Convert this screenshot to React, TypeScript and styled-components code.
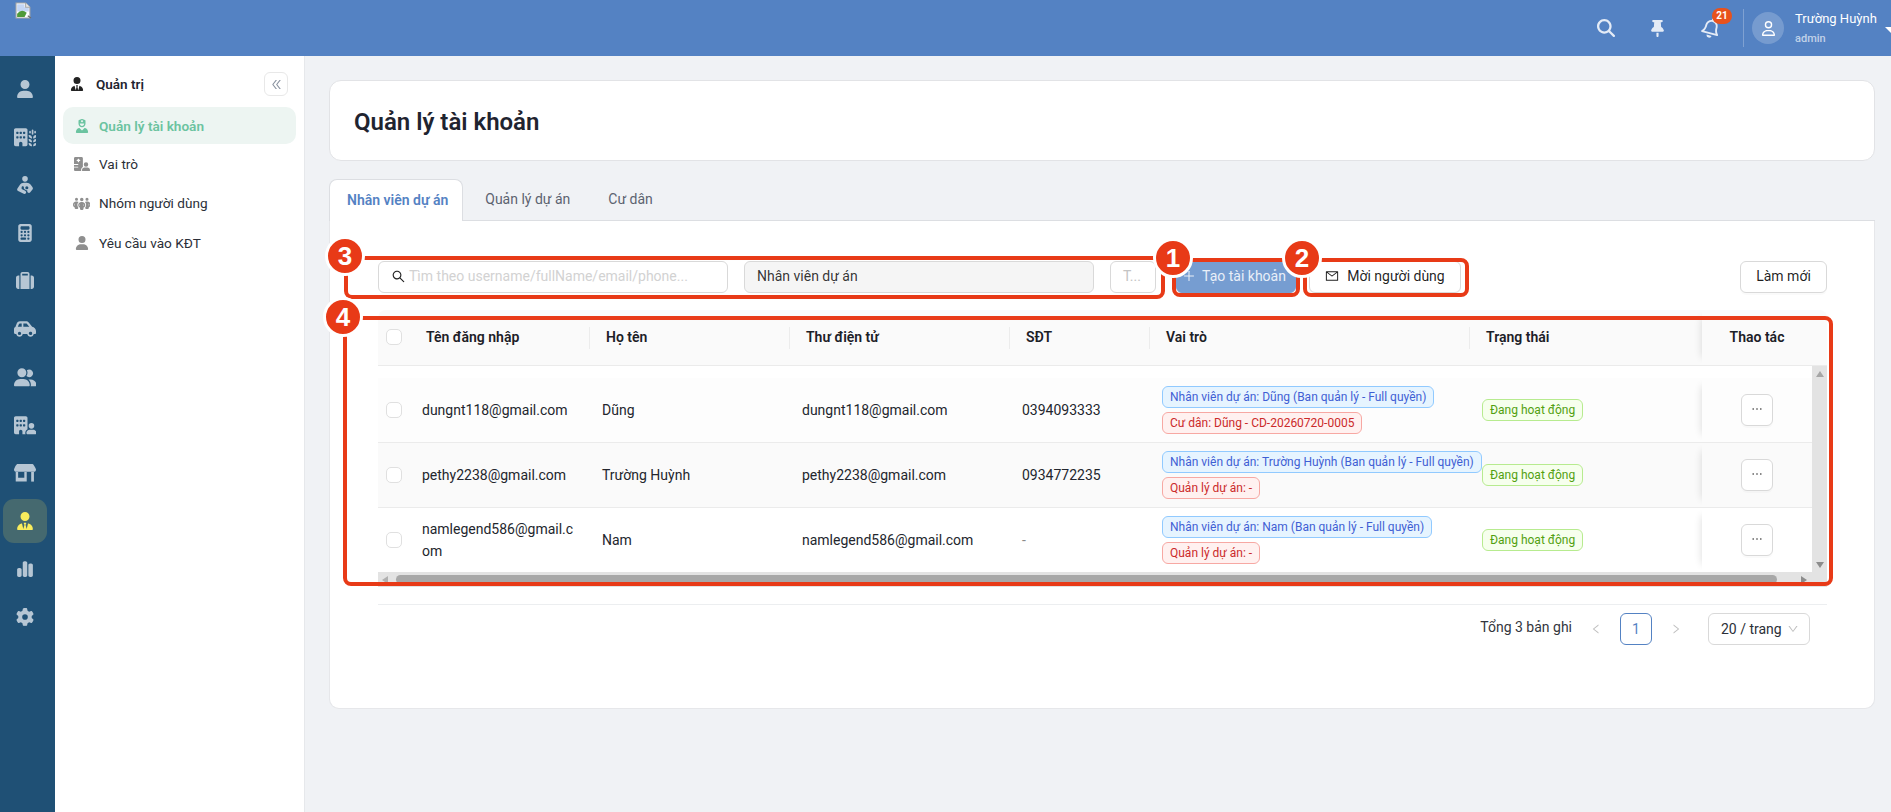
import React from "react";
import styled, { createGlobalStyle } from "styled-components";
import {
  FaUser, FaBuildingWheat, FaPersonBreastfeeding, FaCalculator, FaSuitcase, FaCarSide,
  FaUserGroup, FaBuildingUser, FaUserTie, FaChartSimple, FaGear, FaUserNurse, FaHospitalUser,
  FaPeopleGroup, FaMagnifyingGlass, FaThumbtack, FaRegBell, FaRegUser,
} from "react-icons/fa6";
import {
  AiOutlineDoubleLeft, AiOutlineSearch, AiOutlinePlus, AiOutlineMail, AiOutlineEllipsis,
  AiOutlineLeft, AiOutlineRight, AiOutlineDown,
} from "react-icons/ai";

const GlobalStyle = createGlobalStyle`
  html, body { margin: 0; padding: 0; height: 100%; overflow: hidden; background: #f0f2f5; }
  * { box-sizing: border-box; }
  body { font-family: Roboto, "Liberation Sans", sans-serif; font-size: 14px; color: rgba(0,0,0,.88); }
`;

const COLUMNS = "32px 180px 200px 220px 140px 320px 232px";

const Page = styled.div`
  position: relative; width: 1891px; height: 812px; overflow: hidden;
  display: flex; flex-direction: column;
`;
const TopBar = styled.header`
  height: 56px; flex: none; background: #5482c3; display: flex; align-items: flex-start;
  padding-left: 15px; overflow: hidden;
`;
const BrokenLogo = styled.svg`
  width: 17px; height: 17px; margin-top: 2px; flex: none;
`;
const TopActions = styled.div`
  margin-left: auto; height: 56px; display: flex; align-items: center; flex: none;
`;
const TopIcon = styled.span<{ $w: number; $tilt?: number }>`
  position: relative; display: flex; align-items: center; justify-content: center;
  width: ${(p) => p.$w}px; height: 24px; color: #e4ebf6;
  svg { transform: rotate(${(p) => p.$tilt || 0}deg); flex: none; }
`;
const Badge = styled.span`
  position: absolute; left: 10px; top: -8px; width: 20px; height: 16px; border-radius: 8px;
  background: #e8521c; color: #fff; font-size: 10px; font-weight: 700; line-height: 16px; text-align: center;
`;
const Divider = styled.span`
  width: 1px; height: 38px; background: rgba(255,255,255,.25); margin: 0 8px 0 23px;
`;
const Avatar = styled.span`
  width: 32px; height: 32px; border-radius: 50%; background: rgba(255,255,255,.2); color: #fff;
  display: flex; align-items: center; justify-content: center;
`;
const UserBox = styled.div`
  width: 90px; margin-left: 11px; display: flex; flex-direction: column;
`;
const UserName = styled.span`
  font-size: 13px; line-height: 18px; color: #fff; white-space: nowrap; margin-top: -1px;
`;
const UserRole = styled.span`
  font-size: 11px; line-height: 14px; margin-top: 4px; color: rgba(255,255,255,.65); font-weight: 500;
`;
const Caret = styled.span`
  width: 0; height: 0; border-left: 6px solid transparent; border-right: 6px solid transparent;
  border-top: 6px solid #fff; margin: 4px -6px 0 0; flex: none;
`;
const Body = styled.div`
  flex: 1; display: flex; min-height: 0;
`;
const Rail = styled.nav`
  width: 55px; flex: none; background: #1f5075; padding: 11px 0 0 3px;
  display: flex; flex-direction: column; gap: 4px;
`;
const RailItem = styled.span<{ $active?: boolean }>`
  width: 44px; height: 44px; border-radius: 11px; display: flex; align-items: center; justify-content: center;
  background: ${(p) => (p.$active ? "#45696f" : "transparent")};
  color: ${(p) => (p.$active ? "#f9ec5c" : "#b6c6d4")};
  svg { flex: none; }
`;
const Side = styled.aside`
  width: 250px; flex: none; background: #fff; border-right: 1px solid #e6e8eb; padding: 16px 8px 0;
`;
const SideHead = styled.div`
  display: flex; align-items: center; height: 24px; padding-left: 7px; margin-bottom: 11px; color: #222;
`;
const SideTitle = styled.span`
  font-size: 13.5px; font-weight: 600; margin-left: 12px; color: #1f2430;
`;
const Collapse = styled.span`
  margin-left: auto; margin-right: 8px; width: 24px; height: 24px; border: 1px solid #e8e8e8; border-radius: 6px;
  display: flex; align-items: center; justify-content: center; color: #8a93a0;
  svg { height: 13px; width: 13px; }
`;
const SideList = styled.div`
  display: flex; flex-direction: column; gap: 2.4px;
`;
const SideItem = styled.div<{ $active?: boolean }>`
  height: 37px; border-radius: 10px; display: flex; align-items: center; padding: 0 0 ${(p) => (p.$active ? 0 : 2)}px 10px;
  background: ${(p) => (p.$active ? "#edf5f2" : "transparent")};
  color: ${(p) => (p.$active ? "#6bc3a0" : "#2b2f38")};
  font-size: 13.6px; font-weight: ${(p) => (p.$active ? 600 : 400)};
`;
const SideGlyph = styled.span<{ $active?: boolean }>`
  width: 17px; display: flex; justify-content: center; margin-right: 9px;
  color: ${(p) => (p.$active ? "#6bc3a0" : "#8f8f8f")};
  svg { flex: none; }
`;
const Main = styled.main`
  flex: 1; min-width: 0; padding: 24px 16px 0 24px; background: #f0f2f5;
`;
const TitleCard = styled.section`
  height: 81px; background: #fff; border: 1px solid #e2e3e6; border-radius: 12px; display: flex; align-items: center; padding: 2px 0 0 24px;
`;
const Title = styled.h1`
  margin: 0; font-size: 24px; font-weight: 600; color: #1f2430;
`;
const Tabs = styled.div`
  display: flex; gap: 6px; height: 42px; margin-top: 18px; border-bottom: 1px solid #dcdee2;
`;
const Tab = styled.div<{ $active?: boolean }>`
  padding: ${(p) => (p.$active ? "0 14px 2px 17px" : "0 15px 2px")}; display: flex; align-items: center; font-size: 14px;
  margin-bottom: ${(p) => (p.$active ? "-1px" : "0")};
  background: ${(p) => (p.$active ? "#fff" : "transparent")};
  border: 1px solid ${(p) => (p.$active ? "#dcdee2" : "transparent")}; border-bottom: 0;
  border-radius: 8px 8px 0 0;
  color: ${(p) => (p.$active ? "#5482c3" : "#5c6370")}; font-weight: ${(p) => (p.$active ? 600 : 400)};
`;
const Panel = styled.section`
  height: 488px; background: #fff; border: 1px solid #e6e7ea; border-top: 0; border-radius: 0 0 10px 10px;
  padding: 40px 47px 0 48px;
`;
const Toolbar = styled.div`
  display: flex; height: 32px; gap: 20px;
`;
const ToolGroup = styled.div<{ $gap: number }>`
  display: flex; gap: ${(p) => p.$gap}px;
`;
const SearchBox = styled.div`
  width: 350px; height: 32px; border: 1px solid #d9d9d9; border-radius: 6px; background: #fff;
  display: flex; align-items: center; padding: 0 0 2px 12px; gap: 3px; color: #222;
  svg { width: 15px; height: 15px; flex: none; }
`;
const Placeholder = styled.span`
  color: #d2d2d2; font-size: 14px; white-space: nowrap;
`;
const SelectBox = styled.div<{ $w: number; $muted?: boolean; $fill?: boolean }>`
  width: ${(p) => p.$w}px; height: 32px; border: 1px solid #d9d9d9; border-radius: 6px;
  background: ${(p) => (p.$fill ? "#f5f5f5" : "#fff")}; display: flex; align-items: center; padding: 0 0 2px 12px;
  color: ${(p) => (p.$muted ? "#c4c4c4" : "rgba(0,0,0,.8)")}; font-size: 14px; white-space: nowrap;
`;
const Btn = styled.button<{ $w: number; $primary?: boolean }>`
  width: ${(p) => p.$w}px; height: 32px; border-radius: 6px; font: inherit; font-size: 14px;
  padding: ${(p) => (p.$primary ? "0 4px 2px 0" : "0 0 2px")};
  border: 1px solid ${(p) => (p.$primary ? "#769dd1" : "#d9d9d9")};
  background: ${(p) => (p.$primary ? "#769dd1" : "#fff")};
  color: ${(p) => (p.$primary ? "#e9eff8" : "rgba(0,0,0,.88)")};
  display: flex; align-items: center; justify-content: center; gap: ${(p) => (p.$primary ? 6 : 8)}px; flex: none;
  box-shadow: 0 2px 0 rgba(0,0,0,.02);
  svg { width: 14px; height: 14px; }
`;
const Spacer = styled.span`
  flex: 1;
`;
const TableWrap = styled.div`
  margin-top: 17px; border-radius: 8px 8px 0 0; overflow: hidden; width: 1449px;
`;
const HeaderRow = styled.div`
  display: flex; height: 56px; background: #fafafa; border-bottom: 1px solid #ebebeb;
`;
const HeaderGrid = styled.div`
  display: grid; grid-template-columns: ${COLUMNS}; flex: none;
`;
const HeadCell = styled.div`
  position: relative; display: flex; align-items: center; padding: 0 0 1px 16px; font-weight: 600; font-size: 14px; color: #1c2027;
  &::after { content: ""; position: absolute; right: 0; top: 17px; height: 22px; width: 1px; background: #ececec; }
  &:nth-child(1)::after, &:nth-child(7)::after { display: none; }
  &:nth-child(1) { padding-left: 8px; }
`;
const StickyHead = styled.div`
  width: 125px; flex: none; padding: 0 15px 1px 0; display: flex; align-items: center; justify-content: center;
  font-weight: 600; font-size: 14px; color: #1c2027; background: #fafafa;
  box-shadow: -8px 0 8px -8px rgba(0,0,0,.14);
`;
const Check = styled.span`
  width: 16px; height: 16px; border-radius: 5px; border: 1px solid #e0e0e0; background: #fff; display: block;
`;
const BodyArea = styled.div`
  display: flex; height: 206px;
`;
const Rows = styled.div`
  width: 1434px; flex: none; padding-top: 12px; background: #fff;
`;
const Row = styled.div<{ $h: number; $bg: string; $line?: boolean }>`
  display: flex; height: ${(p) => p.$h}px; background: ${(p) => p.$bg};
  border-bottom: ${(p) => (p.$line ? "1px solid #ebebeb" : "0")};
`;
const RowGrid = styled.div`
  display: grid; grid-template-columns: ${COLUMNS}; flex: none;
`;
const Cell = styled.div`
  display: flex; align-items: center; padding: 0 12px; line-height: 22px; font-size: 14px; color: #23262d;
  overflow-wrap: anywhere;
  &:nth-child(1) { padding: 0 0 0 8px; }
`;
const Dash = styled.span`
  color: #8a8a8a;
`;
const TagStack = styled.div`
  display: flex; flex-direction: column; align-items: flex-start; gap: 4px;
`;
const Tag = styled.span<{ $tone: "blue" | "red" | "green" }>`
  height: 22px; border-radius: 6px; padding: 0 7px; font-size: 12px; line-height: 20px; white-space: nowrap; position: relative;
  border: 1px solid ${(p) => ({ blue: "#91caff", red: "#f7a8a3", green: "#b7eb8f" }[p.$tone])};
  background: ${(p) => ({ blue: "#e6f4ff", red: "#fff1f0", green: "#f6ffed" }[p.$tone])};
  color: ${(p) => ({ blue: "#3f5fd4", red: "#cb2a2a", green: "#52a010" }[p.$tone])};
`;
const StickyCell = styled.div`
  width: 110px; flex: none; display: flex; align-items: center; justify-content: center; background: inherit; position: relative;
  box-shadow: -8px 0 8px -8px rgba(0,0,0,.14);
`;
const MoreBtn = styled.button`
  width: 32px; height: 32px; border: 1px solid #d9d9d9; border-radius: 6px; background: #fff; padding: 0 0 2px;
  display: flex; align-items: center; justify-content: center; color: #222; box-shadow: 0 2px 0 rgba(0,0,0,.02);
  svg { width: 14px; height: 14px; }
`;
const VScroll = styled.div`
  width: 15px; flex: none; background: #e3e3e3; display: flex; flex-direction: column; justify-content: space-between; align-items: center; padding: 5px 0 4px;
`;
const ArrowUp = styled.span`
  width: 0; height: 0; border: 4px solid transparent; border-top: 0; border-bottom: 6px solid #a6a6a6;
`;
const ArrowDown = styled.span`
  width: 0; height: 0; border: 4px solid transparent; border-bottom: 0; border-top: 6px solid #8c8c8c;
`;
const HScroll = styled.div`
  height: 15px; background: #e3e3e3; display: flex; align-items: center; padding: 0 18px 0 4px;
`;
const ArrowLeft = styled.span`
  width: 0; height: 0; border: 4px solid transparent; border-left: 0; border-right: 6px solid #b0b0b0; flex: none;
`;
const ArrowRight = styled.span`
  width: 0; height: 0; border: 4px solid transparent; border-right: 0; border-left: 6px solid #8c8c8c; flex: none; margin-left: 24px;
`;
const Thumb = styled.span`
  width: 1381px; height: 9px; border-radius: 5px; background: #a8a8a8; margin-left: 8px; flex: none;
`;
const Footer = styled.div`
  margin-top: 17px; width: 1449px; border-top: 1px solid #eceef0; padding: 8px 17px 0 0;
  display: flex; justify-content: flex-end; align-items: center; gap: 8px;
`;
const Total = styled.span`
  font-size: 14px; color: #33363d; margin-top: -4px;
`;
const PageArrow = styled.span`
  width: 32px; height: 32px; display: flex; align-items: center; justify-content: center; color: #bfbfbf;
  svg { width: 12px; height: 12px; }
`;
const PageNum = styled.span`
  width: 32px; height: 32px; border: 1px solid #5482c3; border-radius: 6px; color: #5482c3; display: flex; align-items: center; justify-content: center;
`;
const PageSize = styled.div`
  width: 102px; height: 32px; margin-left: 8px; border: 1px solid #d9d9d9; border-radius: 6px; display: flex; align-items: center;
  padding: 0 10px 0 12px; justify-content: space-between; color: #2b2f38;
  svg { width: 12px; height: 12px; color: #bfbfbf; }
`;
const Mark = styled.div<{ $l: number; $t: number; $w: number; $h: number }>`
  position: absolute; left: ${(p) => p.$l}px; top: ${(p) => p.$t}px; width: ${(p) => p.$w}px; height: ${(p) => p.$h}px;
  border: 4px solid #e83a17; border-radius: 8px; pointer-events: none;
`;
const Num = styled.div<{ $x: number; $y: number }>`
  position: absolute; left: ${(p) => p.$x - 20}px; top: ${(p) => p.$y - 20}px; width: 40px; height: 40px; border-radius: 50%;
  background: #e83a17; border: 3px solid #fff; color: #fff; font: 700 26px/34px "Liberation Sans", Arial, sans-serif; text-align: center;
`;
const StoreSvg = styled.svg`
  width: 22px; height: 18px; flex: none;
`;

const StoreIcon = () => (
  <StoreSvg viewBox="0 0 64 52" fill="currentColor">
    <path d="M9 0H54Q58 2 64 15Q64 22 60 22H4Q0 22 0 15Q4 4 9 0Z" />
    <path fillRule="evenodd" d="M5 23H37V51H5ZM12 23V40H30V23Z" />
    <rect x="50" y="23" width="8" height="28" />
  </StoreSvg>
);

const railIcons = [
  <FaUser size={18} />, <FaBuildingWheat size={22.5} />, <FaPersonBreastfeeding size={18} />, <FaCalculator size={18} />,
  <FaSuitcase size={18} />, <FaCarSide size={22} />, <FaUserGroup size={22.5} />, <FaBuildingUser size={22.5} />,
  <StoreIcon />, <FaUserTie size={18} />, <FaChartSimple size={18} />, <FaGear size={18} />,
];

const people = [
  { user: "dungnt118@gmail.com", name: "Dũng", mail: "dungnt118@gmail.com", phone: "0394093333",
    a: "Nhân viên dự án: Dũng (Ban quản lý - Full quyền)", b: "Cư dân: Dũng - CD-20260720-0005", h: 65, bg: "#fdfdfd", line: true },
  { user: "pethy2238@gmail.com", name: "Trường Huỳnh", mail: "pethy2238@gmail.com", phone: "0934772235",
    a: "Nhân viên dự án: Trường Huỳnh (Ban quản lý - Full quyền)", b: "Quản lý dự án: -", h: 65, bg: "#fafafa", line: true },
  { user: "namlegend586@gmail.com", name: "Nam", mail: "namlegend586@gmail.com", phone: "",
    a: "Nhân viên dự án: Nam (Ban quản lý - Full quyền)", b: "Quản lý dự án: -", h: 64, bg: "#fff", line: false },
];

export default function App() {
  return (
    <Page>
      <GlobalStyle />
      <TopBar>
        <BrokenLogo viewBox="0 0 16 16">
          <path d="M1 1H10L14 5V15H1Z" fill="#fff" stroke="#a8a8a8" />
          <path d="M2 2H9V5H13V9H2Z" fill="#c4d6f5" />
          <path d="M2 14V11Q6 6 11 10L9 14Z" fill="#4f9a3a" />
          <path d="M10 1V5H14" fill="#e8e8e8" stroke="#a8a8a8" />
          <path d="M12 13L15 15" stroke="#6a6a6a" />
        </BrokenLogo>
        <TopActions>
          <TopIcon $w={18}><FaMagnifyingGlass size={18} /></TopIcon>
          <TopIcon $w={33} />
          <TopIcon $w={18}><FaThumbtack size={17} /></TopIcon>
          <TopIcon $w={36} />
          <TopIcon $w={18} $tilt={15}><FaRegBell size={20} /><Badge>21</Badge></TopIcon>
          <Divider />
          <Avatar><FaRegUser size={15} /></Avatar>
          <UserBox>
            <UserName>Trường Huỳnh</UserName>
            <UserRole>admin</UserRole>
          </UserBox>
          <Caret />
        </TopActions>
      </TopBar>
      <Body>
        <Rail>
          {railIcons.map((icon, i) => (
            <RailItem key={i} $active={i === 9}>{icon}</RailItem>
          ))}
        </Rail>
        <Side>
          <SideHead>
            <FaUserTie size={14} />
            <SideTitle>Quản trị</SideTitle>
            <Collapse><AiOutlineDoubleLeft /></Collapse>
          </SideHead>
          <SideList>
            <SideItem $active><SideGlyph $active><FaUserNurse size={14} /></SideGlyph>Quản lý tài khoản</SideItem>
            <SideItem><SideGlyph><FaHospitalUser size={16} /></SideGlyph>Vai trò</SideItem>
            <SideItem><SideGlyph><FaPeopleGroup size={17.5} /></SideGlyph>Nhóm người dùng</SideItem>
            <SideItem><SideGlyph><FaUser size={14} /></SideGlyph>Yêu cầu vào KĐT</SideItem>
          </SideList>
        </Side>
        <Main>
          <TitleCard><Title>Quản lý tài khoản</Title></TitleCard>
          <Tabs>
            <Tab $active>Nhân viên dự án</Tab>
            <Tab>Quản lý dự án</Tab>
            <Tab>Cư dân</Tab>
          </Tabs>
          <Panel>
            <Toolbar>
              <ToolGroup $gap={16}>
                <SearchBox><AiOutlineSearch /><Placeholder>Tìm theo username/fullName/email/phone...</Placeholder></SearchBox>
                <SelectBox $w={350} $fill>Nhân viên dự án</SelectBox>
                <SelectBox $w={46} $muted>T...</SelectBox>
              </ToolGroup>
              <ToolGroup $gap={13}>
                <Btn $w={120} $primary><AiOutlinePlus />Tạo tài khoản</Btn>
                <Btn $w={152}><AiOutlineMail />Mời người dùng</Btn>
              </ToolGroup>
              <Spacer />
              <Btn $w={87}>Làm mới</Btn>
            </Toolbar>
            <TableWrap>
              <HeaderRow>
                <HeaderGrid>
                  <HeadCell><Check /></HeadCell>
                  <HeadCell>Tên đăng nhập</HeadCell>
                  <HeadCell>Họ tên</HeadCell>
                  <HeadCell>Thư điện tử</HeadCell>
                  <HeadCell>SĐT</HeadCell>
                  <HeadCell>Vai trò</HeadCell>
                  <HeadCell>Trạng thái</HeadCell>
                </HeaderGrid>
                <StickyHead>Thao tác</StickyHead>
              </HeaderRow>
              <BodyArea>
                <Rows>
                  {people.map((p) => (
                    <Row key={p.user} $h={p.h} $bg={p.bg} $line={p.line}>
                      <RowGrid>
                        <Cell><Check /></Cell>
                        <Cell>{p.user}</Cell>
                        <Cell>{p.name}</Cell>
                        <Cell>{p.mail}</Cell>
                        <Cell>{p.phone || <Dash>-</Dash>}</Cell>
                        <Cell>
                          <TagStack>
                            <Tag $tone="blue">{p.a}</Tag>
                            <Tag $tone="red">{p.b}</Tag>
                          </TagStack>
                        </Cell>
                        <Cell><Tag $tone="green">Đang hoạt động</Tag></Cell>
                      </RowGrid>
                      <StickyCell><MoreBtn><AiOutlineEllipsis /></MoreBtn></StickyCell>
                    </Row>
                  ))}
                </Rows>
                <VScroll><ArrowUp /><ArrowDown /></VScroll>
              </BodyArea>
              <HScroll><ArrowLeft /><Thumb /><ArrowRight /></HScroll>
            </TableWrap>
            <Footer>
              <Total>Tổng 3 bản ghi</Total>
              <PageArrow><AiOutlineLeft /></PageArrow>
              <PageNum>1</PageNum>
              <PageArrow><AiOutlineRight /></PageArrow>
              <PageSize>20 / trang<AiOutlineDown /></PageSize>
            </Footer>
          </Panel>
        </Main>
      </Body>
      <Mark $l={344} $t={256} $w={821} $h={43} />
      <Mark $l={1172} $t={258} $w={128} $h={39} />
      <Mark $l={1303} $t={258} $w={166} $h={39} />
      <Mark $l={343} $t={316} $w={1490} $h={270} />
      <Num $x={345} $y={256}>3</Num>
      <Num $x={1173} $y={258}>1</Num>
      <Num $x={1302} $y={258}>2</Num>
      <Num $x={343} $y={317}>4</Num>
    </Page>
  );
}
